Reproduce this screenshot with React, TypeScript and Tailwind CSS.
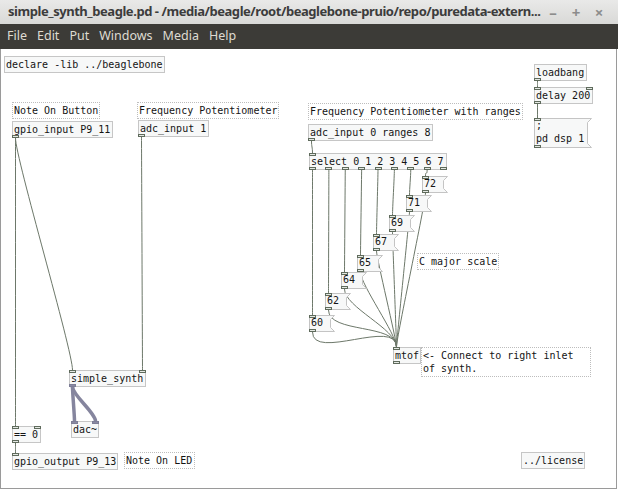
type Port = "c" | "s";

type PdBox = {
  id: string;
  kind: "obj" | "msg" | "cmt";
  x: number;
  y: number;
  w: number;
  text: string;
  ins?: Port[];
  outs?: Port[];
};

type Wire = [string, number, string, number];

const boxes: PdBox[] = [
  { id: "declare", kind: "obj", x: 4, y: 56, w: 161, text: "declare -lib ../beaglebone" },
  { id: "c1", kind: "cmt", x: 12, y: 102, w: 88, text: "Note On Button" },
  { id: "gpioin", kind: "obj", x: 12, y: 121, w: 101, text: "gpio_input P9_11", outs: ["c"] },
  { id: "c2", kind: "cmt", x: 137, y: 102, w: 142, text: "Frequency Potentiometer" },
  { id: "adc1", kind: "obj", x: 138, y: 120, w: 71, text: "adc_input 1", outs: ["c"] },
  { id: "loadbang", kind: "obj", x: 534, y: 64, w: 53, text: "loadbang", outs: ["c"] },
  { id: "delay", kind: "obj", x: 534, y: 87, w: 59, text: "delay 200", ins: ["c", "c"], outs: ["c"] },
  { id: "dsp", kind: "msg", x: 534, y: 118, w: 54, text: ";\npd dsp 1", ins: ["c"], outs: ["c"] },
  { id: "c3", kind: "cmt", x: 308, y: 103, w: 215, text: "Frequency Potentiometer with ranges" },
  { id: "adc0", kind: "obj", x: 308, y: 124, w: 125, text: "adc_input 0 ranges 8", outs: ["c"] },
  {
    id: "select",
    kind: "obj",
    x: 309,
    y: 153,
    w: 138,
    text: "select 0 1 2 3 4 5 6 7",
    ins: ["c"],
    outs: ["c", "c", "c", "c", "c", "c", "c", "c", "c"],
  },
  { id: "m72", kind: "msg", x: 422, y: 176, w: 22, text: "72", ins: ["c"], outs: ["c"] },
  { id: "m71", kind: "msg", x: 406, y: 195, w: 22, text: "71", ins: ["c"], outs: ["c"] },
  { id: "m69", kind: "msg", x: 389, y: 215, w: 22, text: "69", ins: ["c"], outs: ["c"] },
  { id: "m67", kind: "msg", x: 373, y: 234, w: 22, text: "67", ins: ["c"], outs: ["c"] },
  { id: "m65", kind: "msg", x: 357, y: 255, w: 22, text: "65", ins: ["c"], outs: ["c"] },
  { id: "m64", kind: "msg", x: 341, y: 272, w: 22, text: "64", ins: ["c"], outs: ["c"] },
  { id: "m62", kind: "msg", x: 325, y: 293, w: 22, text: "62", ins: ["c"], outs: ["c"] },
  { id: "m60", kind: "msg", x: 309, y: 315, w: 22, text: "60", ins: ["c"], outs: ["c"] },
  { id: "c4", kind: "cmt", x: 417, y: 253, w: 82, text: "C major scale" },
  { id: "mtof", kind: "obj", x: 393, y: 347, w: 28, text: "mtof", ins: ["c"], outs: ["c"] },
  { id: "c5", kind: "cmt", x: 421, y: 347, w: 170, text: "<- Connect to right inlet\nof synth." },
  { id: "synth", kind: "obj", x: 69, y: 370, w: 77, text: "simple_synth", ins: ["c", "c"], outs: ["s"] },
  { id: "dac", kind: "obj", x: 71, y: 421, w: 28, text: "dac~", ins: ["s", "s"] },
  { id: "eq", kind: "obj", x: 12, y: 426, w: 29, text: "== 0", ins: ["c", "c"], outs: ["c"] },
  { id: "gpioout", kind: "obj", x: 12, y: 453, w: 106, text: "gpio_output P9_13", ins: ["c"] },
  { id: "c6", kind: "cmt", x: 124, y: 452, w: 71, text: "Note On LED" },
  { id: "license", kind: "obj", x: 521, y: 452, w: 64, text: "../license" },
];

const wires: Wire[] = [
  ["gpioin", 0, "eq", 0],
  ["gpioin", 0, "synth", 0],
  ["adc1", 0, "synth", 1],
  ["eq", 0, "gpioout", 0],
  ["loadbang", 0, "delay", 0],
  ["delay", 0, "dsp", 0],
  ["adc0", 0, "select", 0],
  ["select", 0, "m60", 0],
  ["select", 1, "m62", 0],
  ["select", 2, "m64", 0],
  ["select", 3, "m65", 0],
  ["select", 4, "m67", 0],
  ["select", 5, "m69", 0],
  ["select", 6, "m71", 0],
  ["select", 7, "m72", 0],
  ["m60", 0, "mtof", 0],
  ["m62", 0, "mtof", 0],
  ["m64", 0, "mtof", 0],
  ["m65", 0, "mtof", 0],
  ["m67", 0, "mtof", 0],
  ["m69", 0, "mtof", 0],
  ["m71", 0, "mtof", 0],
  ["m72", 0, "mtof", 0],
  ["synth", 0, "dac", 0],
  ["synth", 0, "dac", 1],
];

// canvas starts below the menu bar, inside the 1px window border
const OX = 1;
const OY = 49;

const byId = Object.fromEntries(boxes.map((b) => [b.id, b]));
const heightOf = (b: PdBox) => (b.text.includes("\n") ? 30 : 17);
const portX = (b: PdBox, i: number, n: number) => (n > 1 ? (i * (b.w - 7)) / (n - 1) : 0);

function Ports({ box, inset }: { box: PdBox; inset: number }) {
  const ins = box.ins ?? [];
  const outs = box.outs ?? [];
  return (
    <>
      {ins.map((p, i) => (
        <span
          key={"i" + i}
          className={
            "absolute h-[3px] w-[7px] border " +
            (p === "s" ? "border-[#7d7d96] bg-[#8a8aa2]" : "border-[#5f6b5c] bg-[#e4e8e3]")
          }
          style={{ left: portX(box, i, ins.length) - inset, top: -inset }}
        />
      ))}
      {outs.map((p, i) => (
        <span
          key={"o" + i}
          className={
            "absolute h-[3px] w-[7px] border " +
            (p === "s" ? "border-[#7d7d96] bg-[#8a8aa2]" : "border-[#5f6b5c] bg-[#e4e8e3]")
          }
          style={{ left: portX(box, i, outs.length) - inset, bottom: -inset }}
        />
      ))}
    </>
  );
}

function PdNode({ box }: { box: PdBox }) {
  const h = heightOf(box);
  const text = "whitespace-pre pl-[1px] pt-[1px] text-[10px] leading-[13px] text-[#141414]";
  if (box.kind === "msg") {
    return (
      <div className="absolute" style={{ left: box.x - OX, top: box.y - OY, width: box.w, height: h }}>
        <svg className="absolute left-0 top-0 overflow-visible" width={box.w + 4} height={h}>
          <polygon
            points={`0.5,0.5 ${box.w + 3.5},0.5 ${box.w - 0.5},4.5 ${box.w - 0.5},${h - 4.5} ${box.w + 3.5},${h - 0.5} 0.5,${h - 0.5}`}
            fill="#f7f8f8"
            stroke="#c4c4c4"
          />
        </svg>
        <div className={"relative pl-[2px] " + text}>{box.text}</div>
        <Ports box={box} inset={0} />
      </div>
    );
  }
  return (
    <div
      className={
        "absolute border " +
        (box.kind === "cmt" ? "border-dotted border-[#bdbdbd] bg-white" : "border-[#c6c6c6] bg-[#f7f8f8]")
      }
      style={{ left: box.x - OX, top: box.y - OY, width: box.w, height: h }}
    >
      <div className={text}>{box.text}</div>
      <Ports box={box} inset={1} />
    </div>
  );
}

function Wires() {
  return (
    <svg className="absolute inset-0" width="616" height="438">
      {wires.map(([a, ao, b, bi], k) => {
        const from = byId[a];
        const to = byId[b];
        const signal = (from.outs ?? [])[ao] === "s";
        const x1 = from.x + portX(from, ao, (from.outs ?? []).length) + 3.5 - OX;
        const y1 = from.y + heightOf(from) - OY;
        const x2 = to.x + portX(to, bi, (to.ins ?? []).length) + 3.5 - OX;
        const y2 = to.y - OY;
        const k1 = Math.min(Math.max(Math.abs(x2 - x1) * 0.35, 6), 30);
        const d = `M${x1},${y1} C${x1},${y1 + k1} ${x2},${y2 - k1} ${x2},${y2}`;
        return (
          <path
            key={k}
            d={d}
            fill="none"
            stroke={signal ? "#85859e" : "#6d786a"}
            strokeWidth={signal ? 3.5 : 1}
          />
        );
      })}
    </svg>
  );
}

export default function App() {
  const menu = ["File", "Edit", "Put", "Windows", "Media", "Help"];
  return (
    <div className="flex h-[489px] w-[618px] flex-col bg-white">
      <div className="flex h-[24px] items-center justify-between bg-gradient-to-b from-[#e9e9e8] to-[#d9d9d7] pl-[8px] pr-[14px] font-['Noto_Sans',sans-serif]">
        <span className="whitespace-nowrap text-[13px] font-bold tracking-[-0.45px] text-[#3c3c3c]">
          simple_synth_beagle.pd  - /media/beagle/root/beaglebone-pruio/repo/puredata-extern...
        </span>
        <div className="flex items-center gap-[13px] text-[15px] font-bold text-[#8c8c8c]">
          <span className="w-[10px] text-center">–</span>
          <span className="w-[10px] text-center">+</span>
          <span className="w-[10px] text-center">×</span>
        </div>
      </div>
      <div className="flex h-[25px] items-center gap-[10px] bg-[#3c3b37] pl-[7px] font-['Noto_Sans',sans-serif] text-[12.5px] text-[#dfdbd2]">
        {menu.map((m) => (
          <span key={m}>{m}</span>
        ))}
      </div>
      <div className="relative w-[617px] flex-1 border-b border-l border-r border-[#9a9a9a] bg-white font-['DejaVu_Sans_Mono',monospace]">
        <Wires />
        {boxes.map((b) => (
          <PdNode key={b.id} box={b} />
        ))}
      </div>
    </div>
  );
}
